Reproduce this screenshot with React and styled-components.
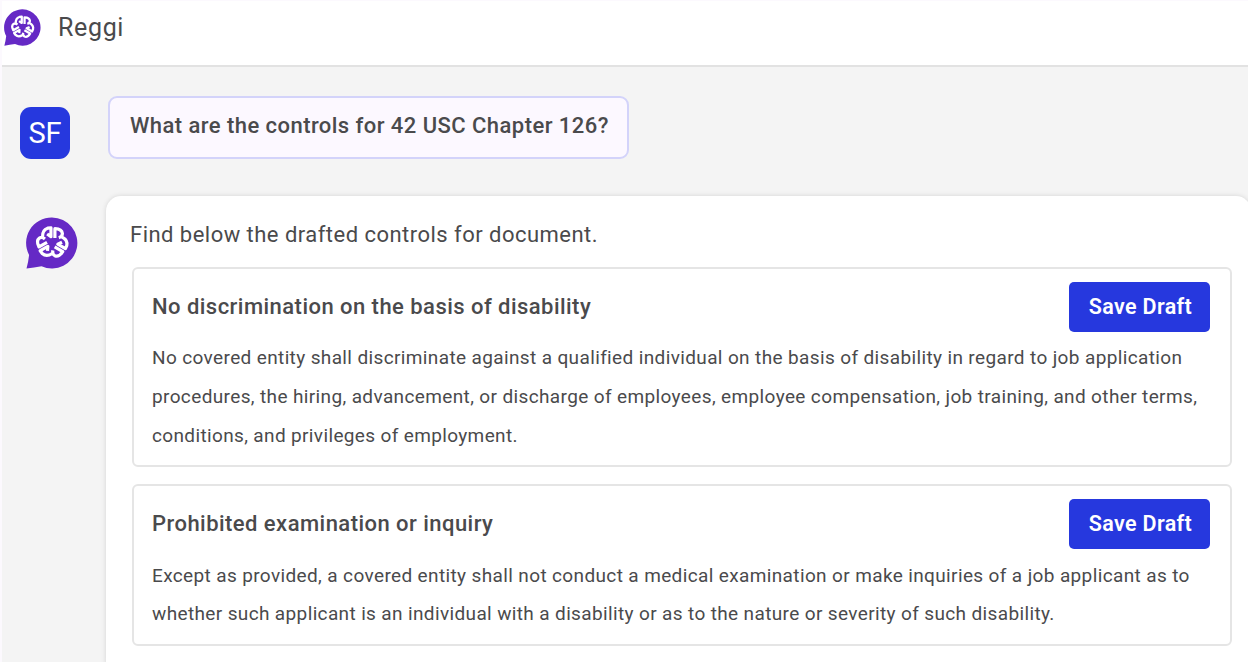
import React from 'react';
import styled, { createGlobalStyle } from 'styled-components';

const GlobalStyle = createGlobalStyle`
  * {
    box-sizing: border-box;
  }

  body {
    margin: 0;
    overflow: hidden;
    background: #f4f4f4;
    font-family: Roboto, "Liberation Sans", sans-serif;
    color: #4a4a4c;
  }
`;

const Page = styled.div`
  height: 662px;
  overflow: hidden;
  background: #f4f4f4;
  border-left: 2px solid #fcf9fe;
`;

const Header = styled.header`
  display: flex;
  align-items: center;
  height: 67px;
  padding: 0 0 11px 2px;
  background: #fff;
  border-top: 1px solid #fcf9fe;
  border-bottom: 2px solid #e2e2e2;
`;

const Brand = styled.h1`
  margin: 0 0 0 17px;
  font-size: 25px;
  font-weight: 400;
  line-height: 30px;
  letter-spacing: 0.65px;
`;

const Message = styled.div`
  display: flex;
  align-items: flex-start;
  padding-left: ${({ $inset }) => $inset}px;
  margin-top: ${({ $top }) => $top}px;
`;

const Avatar = styled.div`
  display: flex;
  align-items: center;
  justify-content: center;
  width: 50px;
  height: 52px;
  margin-top: 11px;
  border-radius: 11px;
  background: #2638de;
  color: #fff;
  font-size: 29px;
`;

const Question = styled.div`
  height: 63px;
  width: 521px;
  margin-left: 38px;
  padding: 0 20px;
  border: 2px solid #d3d3fa;
  border-radius: 9px;
  background: #fcf8ff;
  font-size: 22px;
  font-weight: 500;
  line-height: 56px;
  letter-spacing: 0.45px;
  white-space: nowrap;
`;

const LogoSlot = styled.div`
  width: 52px;
  margin-top: 21px;
`;

const Answer = styled.section`
  flex: none;
  width: 1145px;
  height: 480px;
  margin-left: 28px;
  padding: 25px 19px 0 26px;
  border-radius: 15px;
  background: #fff;
  box-shadow: 0 0 5px rgba(0, 0, 0, 0.13);
`;

const Intro = styled.p`
  margin: 0 0 19px -2px;
  font-size: 22px;
  line-height: 27px;
  letter-spacing: 0.47px;
  white-space: nowrap;
`;

const Card = styled.article`
  width: 1100px;
  height: ${({ $height }) => $height}px;
  margin-bottom: 17px;
  padding: 13px 20px 0 18px;
  border: 2px solid #e5e5e5;
  border-radius: 6px;
`;

const CardHeader = styled.div`
  display: flex;
  align-items: center;
  justify-content: space-between;
  height: 50px;
`;

const CardTitle = styled.h2`
  margin: 0 0 2px;
  font-size: 22px;
  font-weight: 500;
  letter-spacing: 0.46px;
  white-space: nowrap;
`;

const SaveButton = styled.button`
  width: 141px;
  height: 50px;
  padding: 0 0 1px 2px;
  border: none;
  border-radius: 5px;
  background: #2638de;
  color: #fff;
  font-family: inherit;
  font-size: 21.5px;
  font-weight: 600;
  letter-spacing: 0.35px;
  cursor: pointer;
`;

const CardText = styled.p`
  margin: ${({ $top }) => $top}px 0 0;
  font-size: 19px;
  line-height: ${({ $leading }) => $leading}px;
  white-space: nowrap;
`;

const Line = styled.span`
  display: block;
  letter-spacing: ${({ $spacing }) => $spacing}px;
`;

const controls = [
  {
    title: 'No discrimination on the basis of disability',
    height: 200,
    top: 6,
    leading: 39,
    lines: [
      ['No covered entity shall discriminate against a qualified individual on the basis of disability in regard to job application', 0.37],
      ['procedures, the hiring, advancement, or discharge of employees, employee compensation, job training, and other terms,', 0.37],
      ['conditions, and privileges of employment.', 0.36],
    ],
  },
  {
    title: 'Prohibited examination or inquiry',
    height: 162,
    top: 8,
    leading: 38,
    lines: [
      ['Except as provided, a covered entity shall not conduct a medical examination or make inquiries of a job applicant as to', 0.37],
      ['whether such applicant is an individual with a disability or as to the nature or severity of such disability.', 0.365],
    ],
  },
];

// one lobe of the mark, repeated three times around the centre
const lobe = 'M28.9 21V11.7Q35.8 12 36.4 16.5Q36.4 19.6 32.8 20.8M35.8 19.8Q42 23 40.8 28.5L39.4 31.6L31.8 27.2L36 25.2';

const Logo = ({ size }) => (
  <svg width={size} height={size} viewBox="0 0 52 52" fill="none">
    <path d="M26 0.5a25.5 25.5 0 1 1-10.5 48.8Q8 50.5 0.5 51.5Q2.2 46 3.1 38A25.5 25.5 0 0 1 26 .5Z" fill="#6529c5" />
    <g stroke="#fff" strokeWidth="3.2" strokeLinejoin="round">
      {[0, 120, 240].map(angle => (
        <path key={angle} d={lobe} transform={`rotate(${angle} 26.2 25.4)`} />
      ))}
    </g>
  </svg>
);

const App = () => {
  return (
    <Page>
      <GlobalStyle />
      <Header>
        <Logo size={37} />
        <Brand>Reggi</Brand>
      </Header>
      <Message $inset={18} $top={29}>
        <Avatar>SF</Avatar>
        <Question>What are the controls for 42 USC Chapter 126?</Question>
      </Message>
      <Message $inset={24} $top={37}>
        <LogoSlot>
          <Logo size={52} />
        </LogoSlot>
        <Answer>
          <Intro>Find below the drafted controls for document.</Intro>
          {controls.map(control => (
            <Card key={control.title} $height={control.height}>
              <CardHeader>
                <CardTitle>{control.title}</CardTitle>
                <SaveButton>Save Draft</SaveButton>
              </CardHeader>
              <CardText $top={control.top} $leading={control.leading}>
                {control.lines.map(([text, spacing]) => (
                  <Line key={text} $spacing={spacing}>{text}</Line>
                ))}
              </CardText>
            </Card>
          ))}
        </Answer>
      </Message>
    </Page>
  );
};

export default App;
